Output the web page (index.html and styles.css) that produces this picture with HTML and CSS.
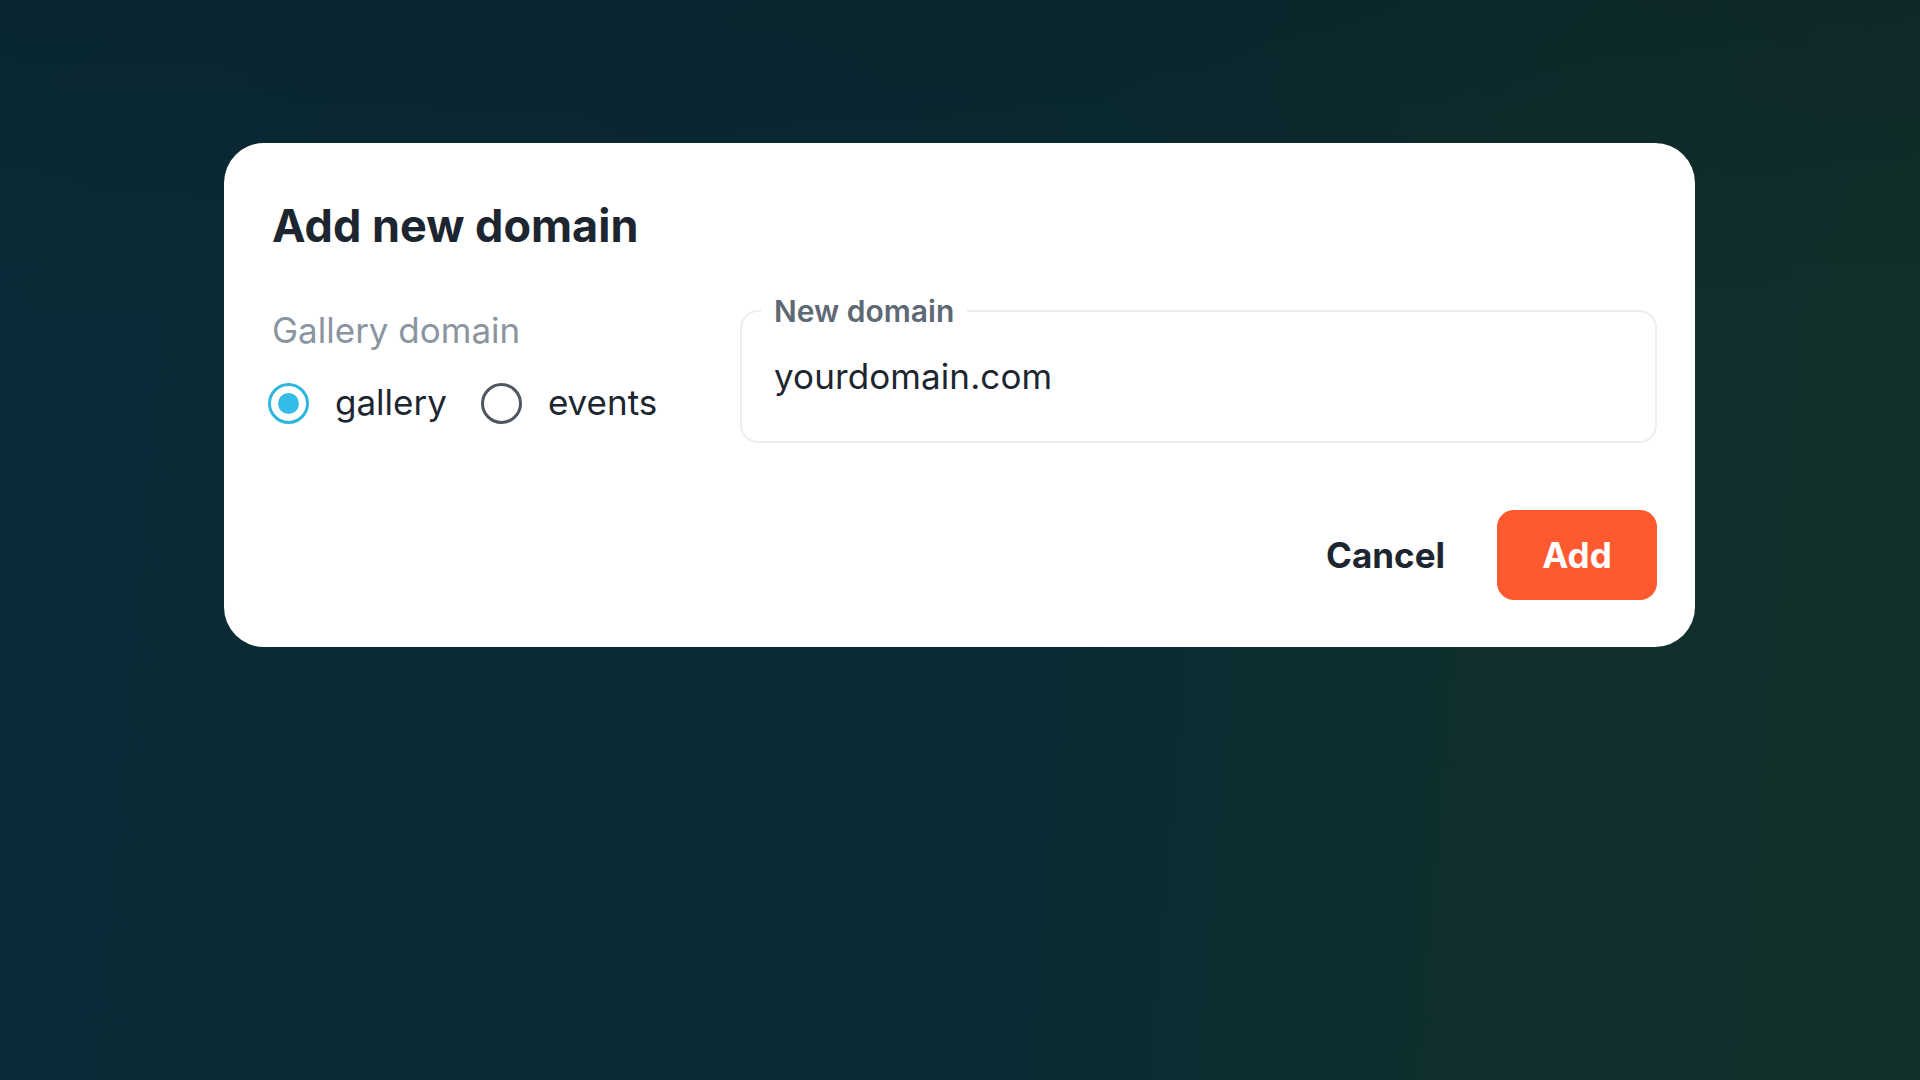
FILE: index.html
```html
<!DOCTYPE html>
<html lang="en">
<head>
<meta charset="utf-8">
<title>Add new domain</title>
<link rel="stylesheet" href="styles.css">
</head>
<body>
<div class="page">
  <div class="dialog">
    <h1 class="title">Add new domain</h1>
    <div class="form-row">
      <div class="choice">
        <div class="choice-label">Gallery domain</div>
        <div class="radios">
          <label class="radio"><span class="dot dot-on"></span><span class="radio-text">gallery</span></label>
          <label class="radio"><span class="dot"></span><span class="radio-text">events</span></label>
        </div>
      </div>
      <fieldset class="field">
        <legend class="field-legend">New domain</legend>
        <div class="field-value">yourdomain.com</div>
      </fieldset>
    </div>
    <div class="actions">
      <button class="btn-cancel">Cancel</button>
      <button class="btn-add">Add</button>
    </div>
  </div>
</div>
</body>
</html>
```
FILE: styles.css
```css
html, body {
  margin: 0;
  padding: 0;
  height: 100%;
}
body {
  font-family: Inter, "Noto Sans", sans-serif;
  background:
    linear-gradient(180deg, rgba(4, 20, 28, 0.25) 0%, rgba(4, 20, 28, 0) 30%),
    linear-gradient(95deg, #0a2c38 0%, #0a2a35 30%, #0a2b33 55%, #0f2e2e 75%, #12302a 100%);
  overflow: hidden;
}
.page {
  height: 1080px;
  padding-top: 143px;
  padding-left: 224px;
  box-sizing: border-box;
}
.dialog {
  width: 1471px;
  height: 504px;
  box-sizing: border-box;
  background: #ffffff;
  border-radius: 40px;
  padding: 0 38px 0 48px;
  display: flex;
  flex-direction: column;
}
.title {
  margin: 0;
  padding-top: 57px;
  font-size: 45px;
  line-height: 52px;
  font-weight: 700;
  color: #1d2630;
}
.form-row {
  display: flex;
  align-items: flex-start;
  margin-top: 48px;
}
.choice {
  width: 468px;
}
.choice-label {
  font-size: 35px;
  line-height: 40px;
  color: #8a95a1;
  margin-top: 10px;
}
.radios {
  display: flex;
  align-items: center;
  margin-top: 31px;
  margin-left: -4px;
}
.radio {
  display: flex;
  align-items: center;
}
.radio + .radio {
  margin-left: 34px;
}
.dot {
  width: 41px;
  height: 41px;
  box-sizing: border-box;
  border-radius: 50%;
  border: 3px solid #4d5661;
  display: flex;
  align-items: center;
  justify-content: center;
}
.dot-on {
  border-color: #2db6de;
}
.dot-on::after {
  content: "";
  width: 21px;
  height: 21px;
  border-radius: 50%;
  background: #33bce6;
}
.radio-text {
  font-size: 35px;
  line-height: 44px;
  color: #1d2630;
  margin-left: 26px;
  position: relative;
  top: -1px;
}
.field {
  flex: 1;
  margin: 0;
  height: 144px;
  box-sizing: border-box;
  border: 2px solid #eceef0;
  border-radius: 18px;
  padding: 0 0 0 19px;
  position: relative;
  top: -1px;
}
.field-legend {
  font-size: 30px;
  font-weight: 600;
  color: #5e6975;
  padding: 0 13px;
  line-height: 24px;
}
.field-value {
  padding-left: 13px;
  margin-top: 31px;
  font-size: 35px;
  line-height: 44px;
  color: #1d2630;
  letter-spacing: 0.1px;
}
.actions {
  display: flex;
  justify-content: flex-end;
  align-items: center;
  margin-top: auto;
  margin-bottom: 47px;
}
.btn-cancel {
  font-family: inherit;
  border: none;
  background: transparent;
  font-size: 35px;
  font-weight: 700;
  color: #1d2630;
  padding: 0;
  margin-right: 52px;
}
.btn-add {
  font-family: inherit;
  border: none;
  background: #ff5a2f;
  color: #ffffff;
  font-size: 35px;
  font-weight: 700;
  width: 160px;
  height: 90px;
  border-radius: 17px;
  padding: 0;
}
```
